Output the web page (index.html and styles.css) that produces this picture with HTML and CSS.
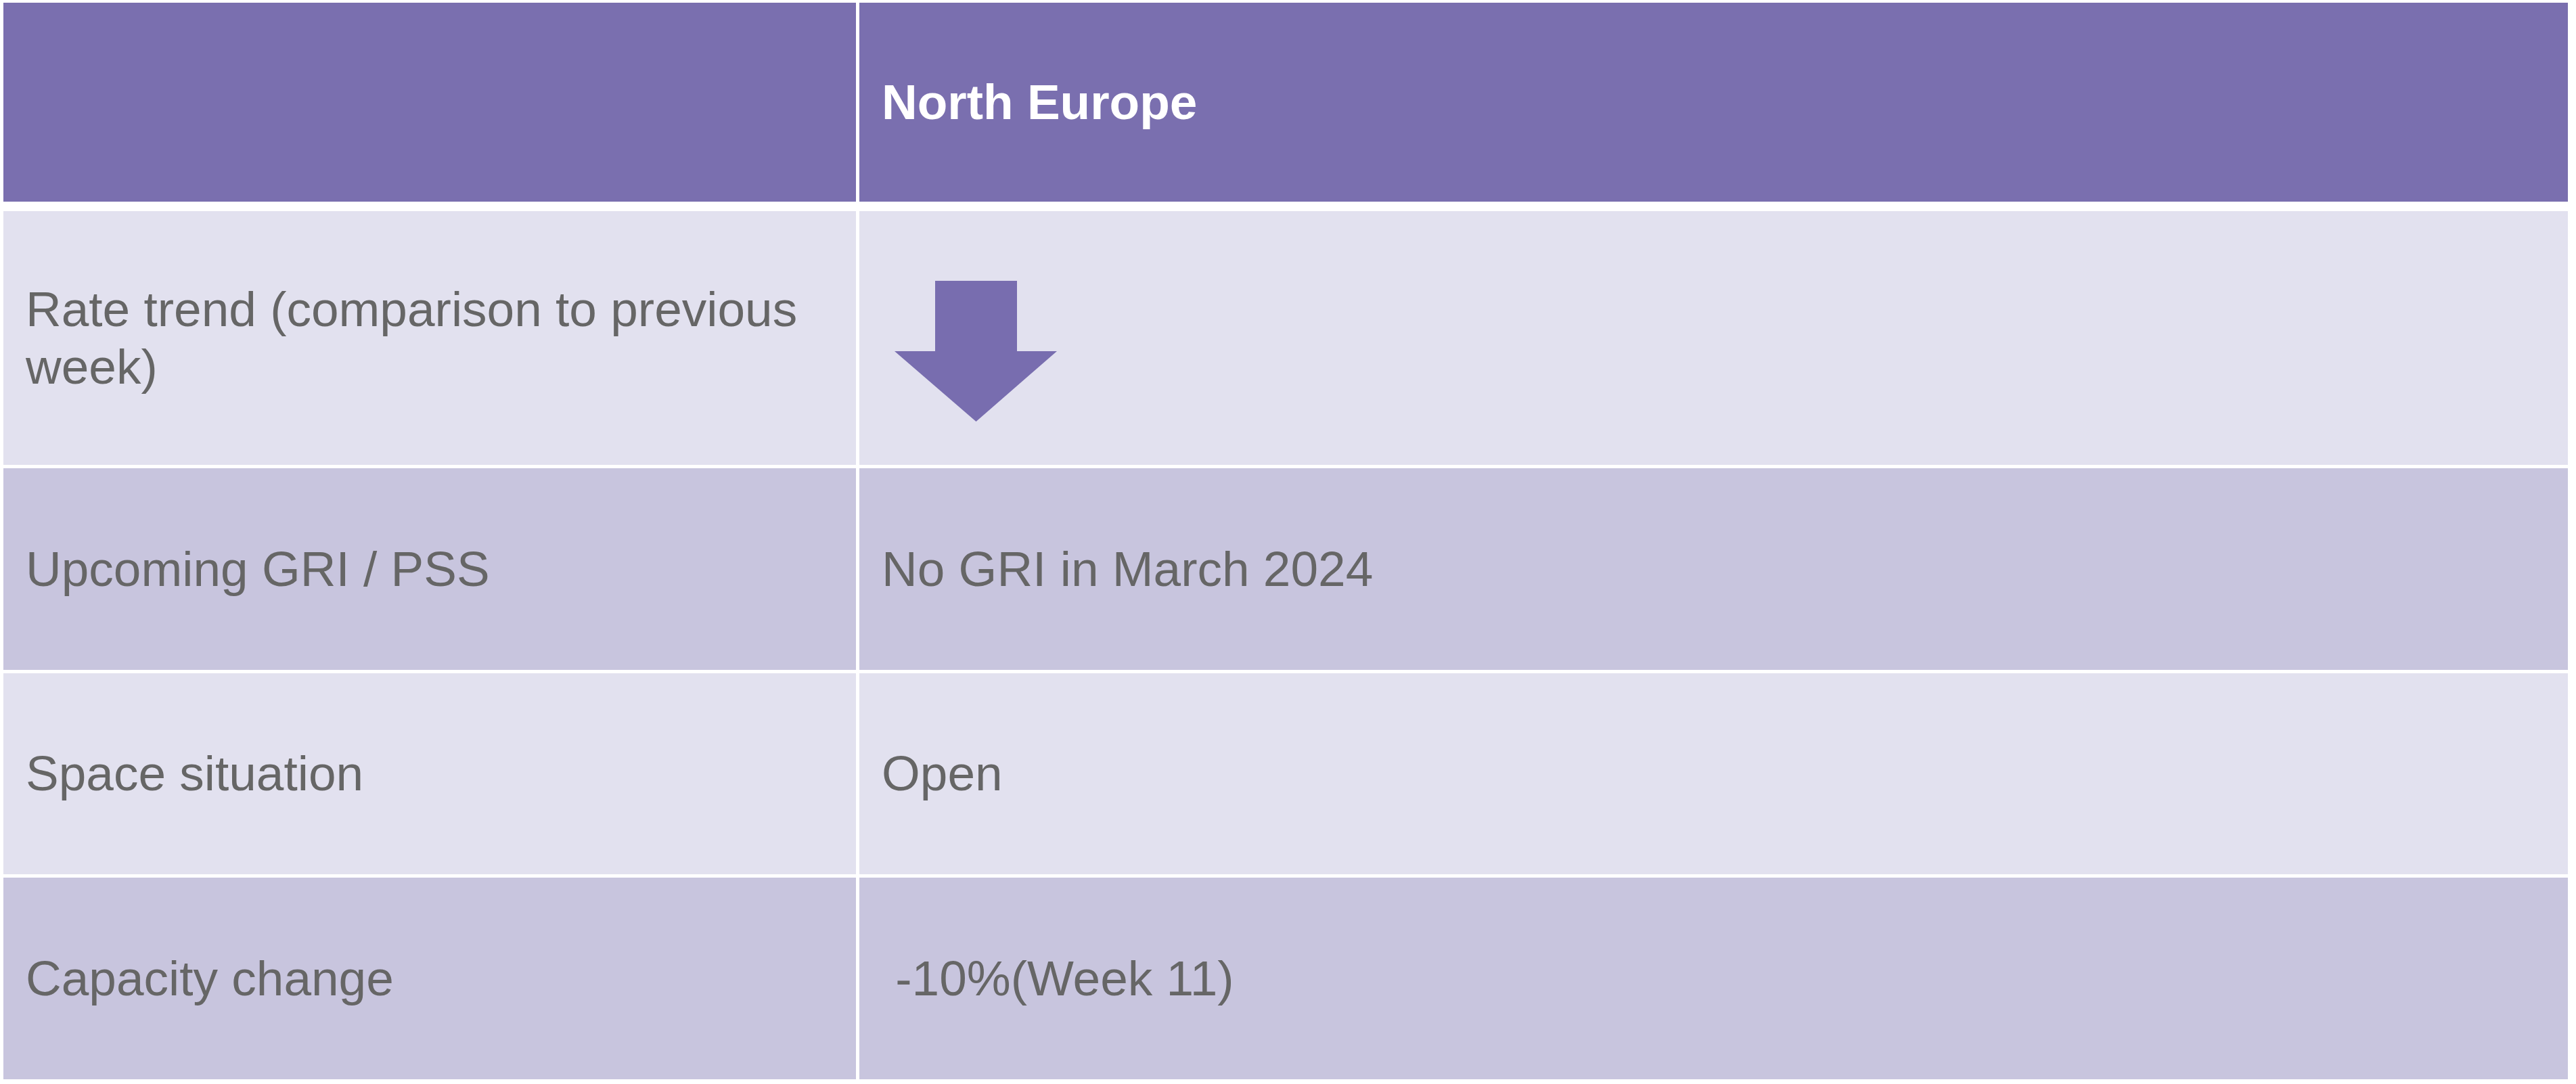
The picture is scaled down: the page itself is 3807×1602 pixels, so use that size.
FILE: index.html
```html
<!DOCTYPE html>
<html lang="en">
<head>
  <meta charset="UTF-8">
  <title>North Europe market update</title>
  <link rel="stylesheet" href="styles.css">
</head>
<body>
  <div class="sheet">
    <div class="row head">
      <div class="cell"></div>
      <div class="cell">North Europe</div>
    </div>
    <div class="row light tall">
      <div class="cell">Rate trend (comparison to previous week)</div>
      <div class="cell">
        <svg class="arrow" width="240" height="208" viewBox="0 0 240 208">
          <polygon points="60,0 181,0 181,104 240,104 120.5,208 0,104 60,104" fill="#786daf"/>
        </svg>
      </div>
    </div>
    <div class="row mid">
      <div class="cell">Upcoming GRI / PSS</div>
      <div class="cell">No GRI in March 2024</div>
    </div>
    <div class="row light short">
      <div class="cell">Space situation</div>
      <div class="cell">Open</div>
    </div>
    <div class="row mid">
      <div class="cell">Capacity change</div>
      <div class="cell">&nbsp;-10%(Week 11)</div>
    </div>
  </div>
</body>
</html>
```

FILE: styles.css
```css
body {
  margin: 0;
  padding: 4px 12px 7px 5px;
  background: #ffffff;
  font-family: "Liberation Sans", Arial, sans-serif;
  font-size: 73px;
  color: #666666;
}

.sheet {
  display: flex;
  flex-direction: column;
  gap: 5px;
}

.row {
  display: grid;
  grid-template-columns: 1260px 2525px;
  column-gap: 5px;
  height: 298px;
}

.cell {
  display: flex;
  align-items: center;
  padding: 0 34px 0 33px;
  line-height: 1.16;
}

.head {
  height: 294px;
  margin-bottom: 9px;
}

.head .cell {
  background: #7a6faf;
  color: #ffffff;
  font-weight: bold;
}

.tall {
  height: 375px;
}

.short {
  height: 297px;
}

.light .cell {
  background: #e2e1ef;
}

.mid .cell {
  background: #c8c5de;
}

.arrow {
  display: block;
  margin: 39px 0 0 19px;
}
```
